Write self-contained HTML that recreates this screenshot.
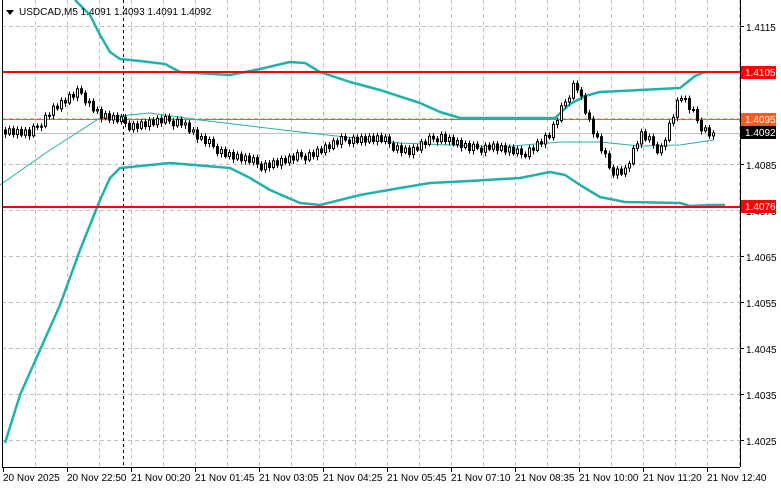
<!DOCTYPE html><html><head><style>
body{margin:0;background:#fff;width:781px;height:489px;overflow:hidden;font-family:"Liberation Sans",sans-serif}
svg{position:absolute;left:0;top:0}
text{font-size:10px;font-family:"Liberation Sans",sans-serif}
</style></head><body>
<svg id="s" width="781" height="489" xmlns="http://www.w3.org/2000/svg">
<g id="grid" stroke="#c0c0c0" stroke-dasharray="4,3" stroke-width="1"></g>
<line x1="2" y1="133.5" x2="740" y2="133.5" stroke="#c0c0c0"/>
<line x1="2" y1="119.5" x2="740" y2="119.5" stroke="#ff5a1e" stroke-width="1"/>
<polyline fill="none" stroke="#20b2aa" stroke-width="1" points="0,185 50,150 100,118 150,113 200,120 300,132 400,143 500,147 560,142 600,142 640,146 680,145 713,140"/>
<polyline fill="none" stroke="#20b2aa" stroke-width="2.5" stroke-linejoin="round" points="75,0 90,15 100,35 110,52 120,59 140,61 165,64 180,72 230,75 260,69 290,62 305,63 320,72 350,82 380,90 420,103 440,112 460,118 500,118 555,118 570,104 585,96 600,92 640,90 680,88 695,76 705,72"/>
<polyline fill="none" stroke="#20b2aa" stroke-width="2.5" stroke-linejoin="round" points="5,443 20,395 40,350 60,305 80,250 100,200 110,178 120,168 130,167 170,163 230,168 250,178 270,190 300,203 320,205 340,200 360,195 400,188 430,183 470,181 520,178 550,172 565,175 580,185 600,197 625,202 680,203 690,206 710,205 725,205"/>
<line x1="2" y1="72" x2="740" y2="72" stroke="#ff0000" stroke-width="2"/>
<line x1="2" y1="207" x2="740" y2="207" stroke="#ff0000" stroke-width="2"/>
<g id="cc"></g>
<line x1="123.5" y1="0" x2="123.5" y2="467" stroke="#000" stroke-dasharray="3,3"/>
<line x1="2.5" y1="0" x2="2.5" y2="467" stroke="#000"/>
<line x1="2" y1="467.5" x2="740" y2="467.5" stroke="#000"/>
<line x1="740.5" y1="0" x2="740.5" y2="467" stroke="#000"/>
<g id="ax"></g>
<path d="M6 10 L14 10 L10 15 Z" fill="#000"/>
<text x="19" y="15" font-size="10">USDCAD,M5  1.4091 1.4093 1.4091 1.4092</text>
<rect x="741" y="66" width="35" height="13" fill="#ff0000"/><text x="745" y="76" fill="#fff">1.4105</text>
<rect x="741" y="113" width="35" height="13" fill="#ff5a1e"/><text x="745" y="123" fill="#fff">1.4095</text>
<rect x="741" y="126" width="35" height="13" fill="#000"/><text x="745" y="136" fill="#fff">1.4092</text>
<rect x="741" y="200" width="35" height="13" fill="#ff0000"/><text x="745" y="210" fill="#fff">1.4076</text>
</svg>
<script>
(function(){
var ns="http://www.w3.org/2000/svg",g=document.getElementById('grid'),ax=document.getElementById('ax'),cg=document.getElementById('cc');
function el(p,t,a,tx){var e=document.createElementNS(ns,t);for(var k in a)e.setAttribute(k,a[k]);if(tx)e.textContent=tx;p.appendChild(e);return e}
for(var x=35;x<740;x+=32)el(g,'line',{x1:x+.5,y1:0,x2:x+.5,y2:467});
var pr=['1.4115','1.4105','1.4095','1.4085','1.4075','1.4065','1.4055','1.4045','1.4035','1.4025'];
for(var i=0;i<10;i++){var y=26+46*i;el(g,'line',{x1:2,y1:y+.5,x2:740,y2:y+.5});el(ax,'line',{x1:740,y1:y+.5,x2:744,y2:y+.5,stroke:'#000'});if(i!=1&&i!=2)el(ax,'text',{x:746,y:y+5},pr[i]);}
var tl=['20 Nov 2025','20 Nov 22:50','21 Nov 00:20','21 Nov 01:45','21 Nov 03:05','21 Nov 04:25','21 Nov 05:45','21 Nov 07:10','21 Nov 08:35','21 Nov 10:00','21 Nov 11:20','21 Nov 12:40'];
for(var i=0;i<12;i++){var x=3+64*i;el(ax,'line',{x1:x+.5,y1:467,x2:x+.5,y2:472,stroke:'#000'});el(ax,'text',{x:x,y:481},tl[i]);}
var kp=[[5,130],[30,135],[50,110],[80,92],[100,115],[130,125],[180,120],[200,140],[230,155],[260,165],[290,160],[320,150],[350,138],[380,140],[410,152],[440,135],[470,150],[490,145],[520,155],[550,135],[575,80],[590,125],[610,170],[625,170],[640,135],[660,150],[680,95],[700,125],[713,135]];
function py(x){for(var i=0;i<kp.length-1;i++)if(x<=kp[i+1][0]){var a=kp[i],b=kp[i+1];return a[1]+(b[1]-a[1])*(x-a[0])/(b[0]-a[0]);}return 135}
var prev=py(5);
for(var x=5;x<=713;x+=4){var cl=py(x)+((x*37)%11-5);var o=prev;var t1=Math.min(o,cl),b1=Math.max(o,cl);if(b1-t1<1)b1=t1+1;
el(cg,'line',{x1:x+.5,y1:t1-2-(x%4),x2:x+.5,y2:b1+2+(x%3),stroke:'#000'});
el(cg,'rect',{x:x-0.5,y:t1,width:2,height:b1-t1,fill:cl<o?'#fff':'#000',stroke:'#000','stroke-width':1});prev=cl;}
})();
</script>
</body></html>
